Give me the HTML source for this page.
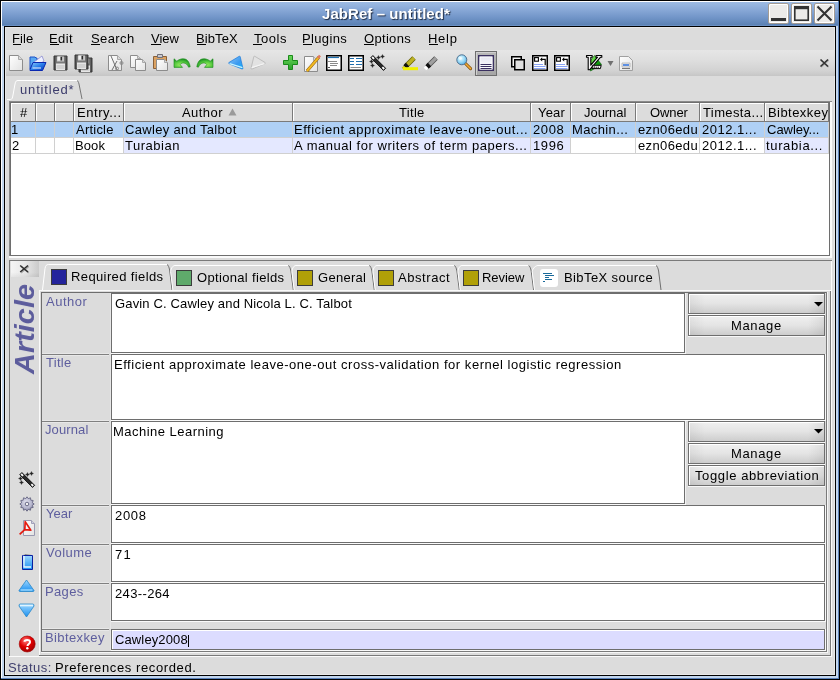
<!DOCTYPE html>
<html><head><meta charset="utf-8">
<style>
*{margin:0;padding:0;box-sizing:border-box}
html,body{width:840px;height:680px;overflow:hidden}
body{position:relative;background:#dcdcdc;font-family:"Liberation Sans",sans-serif;font-size:13px;color:#000}
.a{position:absolute}
.t{position:absolute;white-space:pre;line-height:1;will-change:transform}
svg{overflow:visible}
</style></head><body>
<div class="a" style="left:0px;top:0px;width:840px;height:680px;background:#c2d6ee"></div>
<div class="a" style="left:2px;top:2px;width:837px;height:24px;background:linear-gradient(#9dbbe3,#8aaad8 30%,#7195c8 65%,#5b81b3 96%,#6a90c4 96%)"></div>
<div class="a" style="left:838px;top:1px;width:1px;height:678px;background:#5a80b8"></div>
<div class="a" style="left:1px;top:678px;width:838px;height:1px;background:#5a80b8"></div>
<div class="a" style="left:0px;top:0px;width:840px;height:1px;background:#000"></div>
<div class="a" style="left:0px;top:0px;width:1px;height:680px;background:#000"></div>
<div class="a" style="left:839px;top:0px;width:1px;height:680px;background:#000"></div>
<div class="a" style="left:0px;top:679px;width:840px;height:1px;background:#000"></div>
<div class="a" style="left:1px;top:1px;width:837px;height:1px;background:#fff"></div>
<div class="a" style="left:1px;top:1px;width:1px;height:677px;background:#fff"></div>
<div class="a" style="left:4px;top:26px;width:832px;height:650px;background:#000"></div>
<div class="a" style="left:5px;top:27px;width:830px;height:648px;background:#e8e8e8"></div>
<div class="a" style="left:6px;top:28px;width:828px;height:646px;background:#dcdcdc"></div>
<div class="t" style="left:322.00px;top:6px;font:bold 15px 'Liberation Sans';line-height:1;color:#fff;letter-spacing:0.068px;text-shadow:1px 1px 1px rgba(20,30,50,.9)">JabRef – untitled*</div>
<div class="a" style="left:768px;top:3px;width:21px;height:21px;background:#ecebe9;border:1px solid #a49c94;border-radius:2px;box-shadow:inset 1px 1px 0 #fff,inset -1px -1px 0 #fff"></div>
<div class="a" style="left:791px;top:3px;width:21px;height:21px;background:#ecebe9;border:1px solid #a49c94;border-radius:2px;box-shadow:inset 1px 1px 0 #fff,inset -1px -1px 0 #fff"></div>
<div class="a" style="left:814px;top:3px;width:21px;height:21px;background:#ecebe9;border:1px solid #a49c94;border-radius:2px;box-shadow:inset 1px 1px 0 #fff,inset -1px -1px 0 #fff"></div>
<div class="a" style="left:771px;top:18px;width:15px;height:3px;background:#333"></div>
<svg class="a" style="left:793px;top:5px" width="17" height="17"><rect x="1.8" y="2.8" width="13.4" height="12.4" fill="none" stroke="#333" stroke-width="1.6"/><rect x="1" y="1" width="15" height="3.2" fill="#333"/></svg>
<svg class="a" style="left:814px;top:3px" width="21" height="21"><path d="M3.5 3.5L17.5 17.5M17.5 3.5L3.5 17.5" stroke="#333" stroke-width="2.1"/></svg>
<div class="t" style="left:12.00px;top:32px;font:normal 13px 'Liberation Sans';line-height:1;color:#000;letter-spacing:0.094px;">File</div>
<div class="t" style="left:49.00px;top:32px;font:normal 13px 'Liberation Sans';line-height:1;color:#000;letter-spacing:0.404px;">Edit</div>
<div class="t" style="left:91.00px;top:32px;font:normal 13px 'Liberation Sans';line-height:1;color:#000;letter-spacing:0.408px;">Search</div>
<div class="t" style="left:151.00px;top:32px;font:normal 13px 'Liberation Sans';line-height:1;color:#000;letter-spacing:-0.018px;">View</div>
<div class="t" style="left:196.00px;top:32px;font:normal 13px 'Liberation Sans';line-height:1;color:#000;letter-spacing:0.096px;">BibTeX</div>
<div class="t" style="left:253.60px;top:32px;font:normal 13px 'Liberation Sans';line-height:1;color:#000;letter-spacing:0.538px;">Tools</div>
<div class="t" style="left:302.00px;top:32px;font:normal 13px 'Liberation Sans';line-height:1;color:#000;letter-spacing:0.360px;">Plugins</div>
<div class="t" style="left:364.00px;top:32px;font:normal 13px 'Liberation Sans';line-height:1;color:#000;letter-spacing:0.316px;">Options</div>
<div class="t" style="left:427.70px;top:32px;font:normal 13px 'Liberation Sans';line-height:1;color:#000;letter-spacing:0.731px;">Help</div>
<div class="a" style="left:13px;top:44px;width:8px;height:1px;background:#000"></div>
<div class="a" style="left:50px;top:44px;width:9px;height:1px;background:#000"></div>
<div class="a" style="left:91px;top:44px;width:9px;height:1px;background:#000"></div>
<div class="a" style="left:151px;top:44px;width:10px;height:1px;background:#000"></div>
<div class="a" style="left:197px;top:44px;width:9px;height:1px;background:#000"></div>
<div class="a" style="left:253px;top:44px;width:9px;height:1px;background:#000"></div>
<div class="a" style="left:303px;top:44px;width:9px;height:1px;background:#000"></div>
<div class="a" style="left:364px;top:44px;width:10px;height:1px;background:#000"></div>
<div class="a" style="left:429px;top:44px;width:9px;height:1px;background:#000"></div>
<div class="a" style="left:6px;top:50px;width:829px;height:26px;background:linear-gradient(#e6e6e6,#dedede 40%,#d2d2d2 80%,#c6c6c6)"></div>
<svg class="a" style="left:6px;top:78px" width="90" height="24"><path d="M1 21.5H4.5C6 21.5 6.5 20 7 17L9 6C9.5 3 10.5 2.5 12 2.5H71" fill="none" stroke="#fff" stroke-width="1"/><path d="M71 2.5C72 3 72.5 4 73 6L76 21" fill="none" stroke="#777" stroke-width="1"/></svg>
<div class="t" style="left:19.60px;top:83px;font:normal 13px 'Liberation Sans';line-height:1;color:#3c3c6c;letter-spacing:0.835px;">untitled*</div>
<div class="a" style="left:9px;top:101px;width:823px;height:157px;background:#fff"></div>
<div class="a" style="left:9px;top:101px;width:823px;height:1px;background:#8a8a8a"></div>
<div class="a" style="left:9px;top:101px;width:1px;height:157px;background:#8a8a8a"></div>
<div class="a" style="left:830px;top:102px;width:2px;height:156px;background:#fafafa"></div>
<div class="a" style="left:9px;top:256px;width:823px;height:2px;background:#fafafa"></div>
<div class="a" style="left:10px;top:102px;width:820px;height:154px;border:1px solid #6e6e6e;background:#fff"></div>
<div class="a" style="left:11px;top:103px;width:25px;height:19px;background:#dcdcdc;border-right:1px solid #7a7a7a;border-bottom:1px solid #7a7a7a;box-shadow:inset 1px 1px 0 #fff"></div>
<div class="a" style="left:36px;top:103px;width:19px;height:19px;background:#dcdcdc;border-right:1px solid #7a7a7a;border-bottom:1px solid #7a7a7a;box-shadow:inset 1px 1px 0 #fff"></div>
<div class="a" style="left:55px;top:103px;width:19px;height:19px;background:#dcdcdc;border-right:1px solid #7a7a7a;border-bottom:1px solid #7a7a7a;box-shadow:inset 1px 1px 0 #fff"></div>
<div class="a" style="left:74px;top:103px;width:50px;height:19px;background:#dcdcdc;border-right:1px solid #7a7a7a;border-bottom:1px solid #7a7a7a;box-shadow:inset 1px 1px 0 #fff"></div>
<div class="a" style="left:124px;top:103px;width:169px;height:19px;background:#dcdcdc;border-right:1px solid #7a7a7a;border-bottom:1px solid #7a7a7a;box-shadow:inset 1px 1px 0 #fff"></div>
<div class="a" style="left:293px;top:103px;width:238px;height:19px;background:#dcdcdc;border-right:1px solid #7a7a7a;border-bottom:1px solid #7a7a7a;box-shadow:inset 1px 1px 0 #fff"></div>
<div class="a" style="left:531px;top:103px;width:40px;height:19px;background:#dcdcdc;border-right:1px solid #7a7a7a;border-bottom:1px solid #7a7a7a;box-shadow:inset 1px 1px 0 #fff"></div>
<div class="a" style="left:571px;top:103px;width:65px;height:19px;background:#dcdcdc;border-right:1px solid #7a7a7a;border-bottom:1px solid #7a7a7a;box-shadow:inset 1px 1px 0 #fff"></div>
<div class="a" style="left:636px;top:103px;width:64px;height:19px;background:#dcdcdc;border-right:1px solid #7a7a7a;border-bottom:1px solid #7a7a7a;box-shadow:inset 1px 1px 0 #fff"></div>
<div class="a" style="left:700px;top:103px;width:65px;height:19px;background:#dcdcdc;border-right:1px solid #7a7a7a;border-bottom:1px solid #7a7a7a;box-shadow:inset 1px 1px 0 #fff"></div>
<div class="a" style="left:765px;top:103px;width:64px;height:19px;background:#dcdcdc;border-right:1px solid #7a7a7a;border-bottom:1px solid #7a7a7a;box-shadow:inset 1px 1px 0 #fff"></div>
<div class="a" style="left:11px;top:122px;width:818px;height:15px;background:#afd0f5"></div>
<div class="a" style="left:11px;top:137px;width:818px;height:1px;background:#d0d0d0"></div>
<div class="a" style="left:11px;top:138px;width:818px;height:15px;background:#fff"></div>
<div class="a" style="left:124px;top:138px;width:169px;height:15px;background:#e4e8ff"></div>
<div class="a" style="left:293px;top:138px;width:238px;height:15px;background:#e4e8ff"></div>
<div class="a" style="left:531px;top:138px;width:40px;height:15px;background:#e4e8ff"></div>
<div class="a" style="left:765px;top:138px;width:64px;height:15px;background:#e4e8ff"></div>
<div class="a" style="left:11px;top:153px;width:818px;height:1px;background:#d0d0d0"></div>
<div class="a" style="left:35px;top:122px;width:1px;height:32px;background:#d0d0d0"></div>
<div class="a" style="left:54px;top:122px;width:1px;height:32px;background:#d0d0d0"></div>
<div class="a" style="left:73px;top:122px;width:1px;height:32px;background:#d0d0d0"></div>
<div class="a" style="left:123px;top:122px;width:1px;height:32px;background:#d0d0d0"></div>
<div class="a" style="left:292px;top:122px;width:1px;height:32px;background:#d0d0d0"></div>
<div class="a" style="left:530px;top:122px;width:1px;height:32px;background:#d0d0d0"></div>
<div class="a" style="left:570px;top:122px;width:1px;height:32px;background:#d0d0d0"></div>
<div class="a" style="left:635px;top:122px;width:1px;height:32px;background:#d0d0d0"></div>
<div class="a" style="left:699px;top:122px;width:1px;height:32px;background:#d0d0d0"></div>
<div class="a" style="left:764px;top:122px;width:1px;height:32px;background:#d0d0d0"></div>
<div class="a" style="left:828px;top:122px;width:1px;height:32px;background:#d0d0d0"></div>
<div class="t" style="left:20.10px;top:106px;font:normal 13px 'Liberation Sans';line-height:1;color:#000;letter-spacing:0.000px;">#</div>
<div class="t" style="left:77.00px;top:106px;font:normal 13px 'Liberation Sans';line-height:1;color:#000;letter-spacing:0.557px;">Entry...</div>
<div class="t" style="left:182.40px;top:106px;font:normal 13px 'Liberation Sans';line-height:1;color:#000;letter-spacing:0.445px;">Author</div>
<svg class="a" style="left:228px;top:108px" width="9" height="8"><path d="M4.5 0.5L8.5 7.5H0.5Z" fill="#9a9a9a"/></svg>
<div class="t" style="left:398.95px;top:106px;font:normal 13px 'Liberation Sans';line-height:1;color:#000;letter-spacing:0.313px;">Title</div>
<div class="t" style="left:538.30px;top:106px;font:normal 13px 'Liberation Sans';line-height:1;color:#000;letter-spacing:0.188px;">Year</div>
<div class="t" style="left:583.80px;top:106px;font:normal 13px 'Liberation Sans';line-height:1;color:#000;letter-spacing:-0.042px;">Journal</div>
<div class="t" style="left:650.10px;top:106px;font:normal 13px 'Liberation Sans';line-height:1;color:#000;letter-spacing:-0.115px;">Owner</div>
<div class="t" style="left:703.20px;top:106px;font:normal 13px 'Liberation Sans';line-height:1;color:#000;letter-spacing:0.392px;">Timesta...</div>
<div class="t" style="left:767.70px;top:106px;font:normal 13px 'Liberation Sans';line-height:1;color:#000;letter-spacing:0.442px;">Bibtexkey</div>
<div class="t" style="left:11.30px;top:123px;font:normal 13px 'Liberation Sans';line-height:1;color:#000;letter-spacing:0.000px;">1</div>
<div class="t" style="left:75.70px;top:123px;font:normal 13px 'Liberation Sans';line-height:1;color:#000;letter-spacing:0.219px;">Article</div>
<div class="t" style="left:125.20px;top:123px;font:normal 13px 'Liberation Sans';line-height:1;color:#000;letter-spacing:0.330px;">Cawley and Talbot</div>
<div class="t" style="left:293.50px;top:123px;font:normal 13px 'Liberation Sans';line-height:1;color:#000;letter-spacing:0.500px;">Efficient approximate leave-one-out...</div>
<div class="t" style="left:532.50px;top:123px;font:normal 13px 'Liberation Sans';line-height:1;color:#000;letter-spacing:0.603px;">2008</div>
<div class="t" style="left:572.30px;top:123px;font:normal 13px 'Liberation Sans';line-height:1;color:#000;letter-spacing:0.384px;">Machin...</div>
<div class="t" style="left:637.80px;top:123px;font:normal 13px 'Liberation Sans';line-height:1;color:#000;letter-spacing:0.360px;">ezn06edu</div>
<div class="t" style="left:701.70px;top:123px;font:normal 13px 'Liberation Sans';line-height:1;color:#000;letter-spacing:0.489px;">2012.1...</div>
<div class="t" style="left:766.60px;top:123px;font:normal 13px 'Liberation Sans';line-height:1;color:#000;letter-spacing:-0.010px;">Cawley...</div>
<div class="t" style="left:11.60px;top:139px;font:normal 13px 'Liberation Sans';line-height:1;color:#000;letter-spacing:0.000px;">2</div>
<div class="t" style="left:74.70px;top:139px;font:normal 13px 'Liberation Sans';line-height:1;color:#000;letter-spacing:0.090px;">Book</div>
<div class="t" style="left:125.20px;top:139px;font:normal 13px 'Liberation Sans';line-height:1;color:#000;letter-spacing:0.529px;">Turabian</div>
<div class="t" style="left:293.60px;top:139px;font:normal 13px 'Liberation Sans';line-height:1;color:#000;letter-spacing:0.534px;">A manual for writers of term papers...</div>
<div class="t" style="left:532.50px;top:139px;font:normal 13px 'Liberation Sans';line-height:1;color:#000;letter-spacing:0.603px;">1996</div>
<div class="t" style="left:637.80px;top:139px;font:normal 13px 'Liberation Sans';line-height:1;color:#000;letter-spacing:0.360px;">ezn06edu</div>
<div class="t" style="left:701.70px;top:139px;font:normal 13px 'Liberation Sans';line-height:1;color:#000;letter-spacing:0.489px;">2012.1...</div>
<div class="t" style="left:765.80px;top:139px;font:normal 13px 'Liberation Sans';line-height:1;color:#000;letter-spacing:0.647px;">turabia...</div>
<div class="a" style="left:9px;top:260px;width:823px;height:397px;background:#dcdcdc"></div>
<div class="a" style="left:9px;top:260px;width:823px;height:1px;background:#7a7a7a"></div>
<div class="a" style="left:9px;top:260px;width:1px;height:397px;background:#7a7a7a"></div>
<div class="a" style="left:9px;top:656px;width:823px;height:1px;background:#fafafa"></div>
<div class="a" style="left:831px;top:261px;width:1px;height:396px;background:#fafafa"></div>
<div class="a" style="left:10px;top:261px;width:30px;height:395px;background:#dcdcdc"></div>
<div class="a" style="left:11px;top:261px;width:28px;height:16px;background:linear-gradient(to bottom,rgba(255,255,255,0) 70%,rgba(0,0,0,.06)),linear-gradient(to right,#f4f4f4 0%,#e8e8e8 50%,#cacaca 100%)"></div>
<svg class="a" style="left:19px;top:264px" width="12" height="11"><path d="M1.2 1.5L9 8M9 1.5L1.2 8" stroke="#a8a8a8" stroke-width="1.5" transform="translate(0.8,0.8)"/><path d="M1.2 1.5L9 8M9 1.5L1.2 8" stroke="#2e2e2e" stroke-width="1.5"/></svg>
<div class="t" style="left:0;top:0;transform:translate(25.5px,329px) translate(-50%,-50%) rotate(-90deg) scaleX(1.07);font:italic bold 27px 'Liberation Sans';line-height:1;color:#5c5c9c">Article</div>
<div class="a" style="left:40px;top:290px;width:791px;height:1px;background:#fafafa"></div>
<div class="a" style="left:39px;top:290px;width:1px;height:365px;background:#fafafa"></div>
<div class="a" style="left:830px;top:291px;width:1px;height:365px;background:#7a7a7a"></div>
<div class="a" style="left:39px;top:655px;width:792px;height:1px;background:#7a7a7a"></div>
<div class="a" style="left:41px;top:292px;width:786px;height:360px;background:#dcdcdc"></div>
<div class="a" style="left:41px;top:292px;width:786px;height:1px;background:#6e6e6e"></div>
<div class="a" style="left:41px;top:292px;width:1px;height:360px;background:#6e6e6e"></div>
<div class="a" style="left:826px;top:292px;width:1px;height:360px;background:#7a7a7a"></div>
<div class="a" style="left:41px;top:651px;width:786px;height:1px;background:#7a7a7a"></div>
<div class="a" style="left:827px;top:292px;width:1px;height:361px;background:#f6f6f6"></div>
<div class="a" style="left:41px;top:652px;width:787px;height:1px;background:#f6f6f6"></div>
<div class="a" style="left:110px;top:293px;width:1px;height:358px;background:#e6e6e6"></div>
<div class="a" style="left:111px;top:353px;width:575px;height:1px;background:#fafafa"></div>
<div class="a" style="left:685px;top:293px;width:1px;height:61px;background:#fafafa"></div>
<div class="a" style="left:111px;top:293px;width:574px;height:60px;background:#fff;border:1px solid #6e6e6e"></div>
<div class="a" style="left:42px;top:354px;width:67px;height:1px;background:#808080"></div>
<div class="a" style="left:42px;top:353px;width:67px;height:1px;background:#e8e8e8"></div>
<div class="a" style="left:42px;top:355px;width:67px;height:1px;background:#e8e8e8"></div>
<div class="a" style="left:111px;top:420px;width:715px;height:1px;background:#fafafa"></div>
<div class="a" style="left:825px;top:354px;width:1px;height:67px;background:#fafafa"></div>
<div class="a" style="left:111px;top:354px;width:714px;height:66px;background:#fff;border:1px solid #6e6e6e"></div>
<div class="a" style="left:42px;top:421px;width:67px;height:1px;background:#808080"></div>
<div class="a" style="left:42px;top:420px;width:67px;height:1px;background:#e8e8e8"></div>
<div class="a" style="left:42px;top:422px;width:67px;height:1px;background:#e8e8e8"></div>
<div class="a" style="left:111px;top:504px;width:575px;height:1px;background:#fafafa"></div>
<div class="a" style="left:685px;top:421px;width:1px;height:84px;background:#fafafa"></div>
<div class="a" style="left:111px;top:421px;width:574px;height:83px;background:#fff;border:1px solid #6e6e6e"></div>
<div class="a" style="left:42px;top:505px;width:67px;height:1px;background:#808080"></div>
<div class="a" style="left:42px;top:504px;width:67px;height:1px;background:#e8e8e8"></div>
<div class="a" style="left:42px;top:506px;width:67px;height:1px;background:#e8e8e8"></div>
<div class="a" style="left:111px;top:543px;width:715px;height:1px;background:#fafafa"></div>
<div class="a" style="left:825px;top:505px;width:1px;height:39px;background:#fafafa"></div>
<div class="a" style="left:111px;top:505px;width:714px;height:38px;background:#fff;border:1px solid #6e6e6e"></div>
<div class="a" style="left:42px;top:544px;width:67px;height:1px;background:#808080"></div>
<div class="a" style="left:42px;top:543px;width:67px;height:1px;background:#e8e8e8"></div>
<div class="a" style="left:42px;top:545px;width:67px;height:1px;background:#e8e8e8"></div>
<div class="a" style="left:111px;top:582px;width:715px;height:1px;background:#fafafa"></div>
<div class="a" style="left:825px;top:544px;width:1px;height:39px;background:#fafafa"></div>
<div class="a" style="left:111px;top:544px;width:714px;height:38px;background:#fff;border:1px solid #6e6e6e"></div>
<div class="a" style="left:42px;top:583px;width:67px;height:1px;background:#808080"></div>
<div class="a" style="left:42px;top:582px;width:67px;height:1px;background:#e8e8e8"></div>
<div class="a" style="left:42px;top:584px;width:67px;height:1px;background:#e8e8e8"></div>
<div class="a" style="left:111px;top:621px;width:715px;height:1px;background:#fafafa"></div>
<div class="a" style="left:825px;top:583px;width:1px;height:39px;background:#fafafa"></div>
<div class="a" style="left:111px;top:583px;width:714px;height:38px;background:#fff;border:1px solid #6e6e6e"></div>
<div class="a" style="left:42px;top:629px;width:67px;height:1px;background:#808080"></div>
<div class="a" style="left:42px;top:628px;width:67px;height:1px;background:#e8e8e8"></div>
<div class="a" style="left:42px;top:630px;width:67px;height:1px;background:#e8e8e8"></div>
<div class="a" style="left:111px;top:650px;width:715px;height:1px;background:#fafafa"></div>
<div class="a" style="left:825px;top:629px;width:1px;height:22px;background:#fafafa"></div>
<div class="a" style="left:111px;top:629px;width:714px;height:21px;background:#dcdcff;border:1px solid #6e6e6e;box-shadow:inset 1px 1px 0 #fff"></div>
<div class="a" style="left:685px;top:293px;width:1px;height:60px;background:#f2f2f2"></div>
<div class="a" style="left:685px;top:421px;width:1px;height:83px;background:#f2f2f2"></div>
<div class="a" style="left:688px;top:293px;width:137px;height:21px;border:1px solid #6e6e6e;background:linear-gradient(to right,rgba(0,0,0,.05),rgba(255,255,255,0) 12%,rgba(255,255,255,0) 88%,rgba(0,0,0,.07)),linear-gradient(#f0f0f0,#e4e4e4 50%,#cdcdcd);box-shadow:inset 1px 1px 0 #fff"></div>
<div class="a" style="left:688px;top:314px;width:137px;height:1px;background:#f8f8f8"></div>
<div class="a" style="left:688px;top:315px;width:137px;height:21px;border:1px solid #6e6e6e;background:linear-gradient(to right,rgba(0,0,0,.05),rgba(255,255,255,0) 12%,rgba(255,255,255,0) 88%,rgba(0,0,0,.07)),linear-gradient(#f0f0f0,#e4e4e4 50%,#cdcdcd);box-shadow:inset 1px 1px 0 #fff"></div>
<div class="a" style="left:688px;top:336px;width:137px;height:1px;background:#f8f8f8"></div>
<div class="a" style="left:688px;top:421px;width:137px;height:21px;border:1px solid #6e6e6e;background:linear-gradient(to right,rgba(0,0,0,.05),rgba(255,255,255,0) 12%,rgba(255,255,255,0) 88%,rgba(0,0,0,.07)),linear-gradient(#f0f0f0,#e4e4e4 50%,#cdcdcd);box-shadow:inset 1px 1px 0 #fff"></div>
<div class="a" style="left:688px;top:442px;width:137px;height:1px;background:#f8f8f8"></div>
<div class="a" style="left:688px;top:443px;width:137px;height:21px;border:1px solid #6e6e6e;background:linear-gradient(to right,rgba(0,0,0,.05),rgba(255,255,255,0) 12%,rgba(255,255,255,0) 88%,rgba(0,0,0,.07)),linear-gradient(#f0f0f0,#e4e4e4 50%,#cdcdcd);box-shadow:inset 1px 1px 0 #fff"></div>
<div class="a" style="left:688px;top:464px;width:137px;height:1px;background:#f8f8f8"></div>
<div class="a" style="left:688px;top:465px;width:137px;height:21px;border:1px solid #6e6e6e;background:linear-gradient(to right,rgba(0,0,0,.05),rgba(255,255,255,0) 12%,rgba(255,255,255,0) 88%,rgba(0,0,0,.07)),linear-gradient(#f0f0f0,#e4e4e4 50%,#cdcdcd);box-shadow:inset 1px 1px 0 #fff"></div>
<div class="a" style="left:688px;top:486px;width:137px;height:1px;background:#f8f8f8"></div>
<svg class="a" style="left:814px;top:302px" width="9" height="5"><path d="M0 0H9L4.5 4.5Z" fill="#000"/></svg>
<svg class="a" style="left:814px;top:429px" width="9" height="5"><path d="M0 0H9L4.5 4.5Z" fill="#000"/></svg>
<div class="t" style="left:731.30px;top:319px;font:normal 13px 'Liberation Sans';line-height:1;color:#000;letter-spacing:0.650px;">Manage</div>
<div class="t" style="left:731.30px;top:447px;font:normal 13px 'Liberation Sans';line-height:1;color:#000;letter-spacing:0.650px;">Manage</div>
<div class="t" style="left:695.25px;top:469px;font:normal 13px 'Liberation Sans';line-height:1;color:#000;letter-spacing:0.610px;">Toggle abbreviation</div>
<div class="t" style="left:46.20px;top:295px;font:normal 13px 'Liberation Sans';line-height:1;color:#5e5e9e;letter-spacing:0.525px;">Author</div>
<div class="t" style="left:46.30px;top:356px;font:normal 13px 'Liberation Sans';line-height:1;color:#5e5e9e;letter-spacing:0.288px;">Title</div>
<div class="t" style="left:45.10px;top:423px;font:normal 13px 'Liberation Sans';line-height:1;color:#5e5e9e;letter-spacing:0.108px;">Journal</div>
<div class="t" style="left:46.40px;top:507px;font:normal 13px 'Liberation Sans';line-height:1;color:#5e5e9e;letter-spacing:0.054px;">Year</div>
<div class="t" style="left:45.80px;top:546px;font:normal 13px 'Liberation Sans';line-height:1;color:#5e5e9e;letter-spacing:0.494px;">Volume</div>
<div class="t" style="left:45.40px;top:585px;font:normal 13px 'Liberation Sans';line-height:1;color:#5e5e9e;letter-spacing:0.360px;">Pages</div>
<div class="t" style="left:45.40px;top:631px;font:normal 13px 'Liberation Sans';line-height:1;color:#5e5e9e;letter-spacing:0.380px;">Bibtexkey</div>
<div class="t" style="left:114.60px;top:297px;font:normal 13px 'Liberation Sans';line-height:1;color:#000;letter-spacing:0.153px;">Gavin C. Cawley and Nicola L. C. Talbot</div>
<div class="t" style="left:113.60px;top:358px;font:normal 13px 'Liberation Sans';line-height:1;color:#000;letter-spacing:0.531px;">Efficient approximate leave-one-out cross-validation for kernel logistic regression</div>
<div class="t" style="left:113.30px;top:425px;font:normal 13px 'Liberation Sans';line-height:1;color:#000;letter-spacing:0.472px;">Machine Learning</div>
<div class="t" style="left:114.60px;top:509px;font:normal 13px 'Liberation Sans';line-height:1;color:#000;letter-spacing:0.670px;">2008</div>
<div class="t" style="left:114.60px;top:548px;font:normal 13px 'Liberation Sans';line-height:1;color:#000;letter-spacing:1.270px;">71</div>
<div class="t" style="left:114.60px;top:587px;font:normal 13px 'Liberation Sans';line-height:1;color:#000;letter-spacing:0.356px;">243--264</div>
<div class="t" style="left:114.60px;top:633px;font:normal 13px 'Liberation Sans';line-height:1;color:#000;letter-spacing:0.121px;">Cawley2008</div>
<div class="a" style="left:188px;top:635px;width:1px;height:12px;background:#000"></div>
<svg class="a" style="left:0;top:0" width="840" height="300"><path d="M42.5 290L45 268.5C45.5 265.5 46.5 264.5 48.5 264.5H167" fill="none" stroke="#fff"/><path d="M167 264.5C168.2 265 169 267 169.6 270L172 290" fill="none" stroke="#6e6e6e" stroke-width="1"/><path d="M175 265.5C173 265.5 171 268 170.6 271.5L172.9 290" fill="none" stroke="#fff" stroke-width="1"/><path d="M174.5 265.5H288.3" stroke="#fff" stroke-width="1"/><path d="M288.3 265.5C289.5 266 290.3 268 290.90000000000003 271L293.3 290" fill="none" stroke="#6e6e6e" stroke-width="1"/><path d="M296 265.5C294 265.5 292.3 268 291.90000000000003 271.5L294.2 290" fill="none" stroke="#fff" stroke-width="1"/><path d="M295.5 265.5H369.3" stroke="#fff" stroke-width="1"/><path d="M369.3 265.5C370.5 266 371.3 268 371.90000000000003 271L374.3 290" fill="none" stroke="#6e6e6e" stroke-width="1"/><path d="M377 265.5C375 265.5 373.3 268 372.90000000000003 271.5L375.2 290" fill="none" stroke="#fff" stroke-width="1"/><path d="M376.5 265.5H454.3" stroke="#fff" stroke-width="1"/><path d="M454.3 265.5C455.5 266 456.3 268 456.90000000000003 271L459.3 290" fill="none" stroke="#6e6e6e" stroke-width="1"/><path d="M462 265.5C460 265.5 458.3 268 457.90000000000003 271.5L460.2 290" fill="none" stroke="#fff" stroke-width="1"/><path d="M461.5 265.5H528.6" stroke="#fff" stroke-width="1"/><path d="M528.6 265.5C529.8000000000001 266 530.6 268 531.2 271L533.6 290" fill="none" stroke="#6e6e6e" stroke-width="1"/><path d="M538 265.5C536 265.5 532.6 268 532.2 271.5L534.5 290" fill="none" stroke="#fff" stroke-width="1"/><path d="M537.5 265.5H656" fill="none" stroke="#fff"/><path d="M656 265.5C657.2 266 658 268 658.6 271L661 290" fill="none" stroke="#6e6e6e" stroke-width="1"/></svg>
<div class="a" style="left:51px;top:269px;width:16px;height:16px;background:#24249c;border:1px solid #3c3c3c"></div>
<div class="t" style="left:70.70px;top:270px;font:normal 13px 'Liberation Sans';line-height:1;color:#000;letter-spacing:0.385px;">Required fields</div>
<div class="a" style="left:176px;top:270px;width:16px;height:16px;background:#5faa6b;border:1px solid #3c3c3c"></div>
<div class="t" style="left:197.00px;top:271px;font:normal 13px 'Liberation Sans';line-height:1;color:#000;letter-spacing:0.330px;">Optional fields</div>
<div class="a" style="left:297px;top:270px;width:16px;height:16px;background:#b0a008;border:1px solid #3c3c3c"></div>
<div class="t" style="left:317.50px;top:271px;font:normal 13px 'Liberation Sans';line-height:1;color:#000;letter-spacing:0.273px;">General</div>
<div class="a" style="left:378px;top:270px;width:16px;height:16px;background:#b0a008;border:1px solid #3c3c3c"></div>
<div class="t" style="left:398.00px;top:271px;font:normal 13px 'Liberation Sans';line-height:1;color:#000;letter-spacing:0.561px;">Abstract</div>
<div class="a" style="left:463px;top:270px;width:16px;height:16px;background:#b0a008;border:1px solid #3c3c3c"></div>
<div class="t" style="left:482.00px;top:271px;font:normal 13px 'Liberation Sans';line-height:1;color:#000;letter-spacing:-0.047px;">Review</div>
<div class="a" style="left:540px;top:269px;width:18px;height:18px;background:#fff;border-radius:3px"></div>
<svg class="a" style="left:540px;top:269px" width="18" height="18"><path d="M3 4.5H12M5 6.5H14M5 8.5H9M5 10.5H12M3 12.5H5" stroke="#1a6a9a" stroke-width="1.1"/></svg>
<div class="t" style="left:564.00px;top:271px;font:normal 13px 'Liberation Sans';line-height:1;color:#000;letter-spacing:0.401px;">BibTeX source</div>
<div class="t" style="left:7.60px;top:661px;font:normal 13px 'Liberation Sans';line-height:1;color:#40406e;letter-spacing:0.491px;">Status:</div>
<div class="t" style="left:55.40px;top:661px;font:normal 13px 'Liberation Sans';line-height:1;color:#000;letter-spacing:0.614px;">Preferences recorded.</div>
<svg width="0" height="0" style="position:absolute"><defs>
<linearGradient id="gpage" x1="0" y1="0" x2="1" y2="1"><stop offset="0" stop-color="#ffffff"/><stop offset="1" stop-color="#e2e2e2"/></linearGradient>
<linearGradient id="gblue" x1="0" y1="0" x2="1" y2="1"><stop offset="0" stop-color="#8fd0ff"/><stop offset=".5" stop-color="#2a7de8"/><stop offset="1" stop-color="#0030c0"/></linearGradient>
<linearGradient id="ggreen" x1="0" y1="0" x2="0" y2="1"><stop offset="0" stop-color="#6ad85a"/><stop offset="1" stop-color="#2aa02a"/></linearGradient>
<linearGradient id="gtri" x1="0" y1="0" x2="1" y2="1"><stop offset="0" stop-color="#8ac4f8"/><stop offset=".6" stop-color="#3a9af0"/><stop offset="1" stop-color="#10b8ff"/></linearGradient>
<linearGradient id="gfloppy" x1="0" y1="0" x2="1" y2="0"><stop offset="0" stop-color="#404040"/><stop offset=".2" stop-color="#7a7a7a"/><stop offset=".8" stop-color="#7a7a7a"/><stop offset="1" stop-color="#404040"/></linearGradient>
<linearGradient id="gpress" x1="0" y1="0" x2="0" y2="1"><stop offset="0" stop-color="#b4b4b4"/><stop offset="1" stop-color="#a4a4a4"/></linearGradient>
<linearGradient id="gdoc2" x1="0" y1="0" x2="0" y2="1"><stop offset="0" stop-color="#e4e4f0"/><stop offset="1" stop-color="#ffffff"/></linearGradient>
<radialGradient id="glens" cx=".4" cy=".35" r=".7"><stop offset="0" stop-color="#e8fbff"/><stop offset=".5" stop-color="#9fdcf8"/><stop offset="1" stop-color="#4aa8e0"/></radialGradient>
<radialGradient id="gred" cx=".4" cy=".3" r=".75"><stop offset="0" stop-color="#ff7a7a"/><stop offset=".5" stop-color="#e00000"/><stop offset="1" stop-color="#9a0000"/></radialGradient>
<linearGradient id="gbtn" x1="0" y1="0" x2="0" y2="1"><stop offset="0" stop-color="#9ed8ff"/><stop offset="1" stop-color="#1a8ff0"/></linearGradient>
<radialGradient id="ggear" cx=".45" cy=".4" r=".65"><stop offset="0" stop-color="#e4e4f0"/><stop offset=".6" stop-color="#b4b4cc"/><stop offset="1" stop-color="#6c6c8a"/></radialGradient>
<radialGradient id="gundo" cx=".4" cy=".7" r=".7"><stop offset="0" stop-color="#9af060"/><stop offset=".6" stop-color="#4cc03a"/><stop offset="1" stop-color="#1a9020"/></radialGradient>
<linearGradient id="gvim" x1="0" y1="0" x2="1" y2="1"><stop offset="0" stop-color="#8af060"/><stop offset=".45" stop-color="#40c030"/><stop offset=".55" stop-color="#10a010"/><stop offset="1" stop-color="#087a08"/></linearGradient>
</defs></svg>
<svg class="a" style="left:6px;top:52px" width="20" height="22" viewBox="0 0 20 22"><path d="M3.5 3.5H12.5L16.5 7.5V18.5H3.5Z" fill="url(#gpage)" stroke="#8c8c8c"/><path d="M12.5 3.5V7.5H16.5" fill="#d8d8d8" stroke="#a8a8a8"/></svg>
<svg class="a" style="left:29px;top:55px" width="18" height="17" viewBox="0 0 18 17"><path d="M1 2H6L7 3H8V14H1Z" fill="#5aa8f0" stroke="#1a50c8"/><path d="M5 7L13 1L15 6L7 12Z" fill="#eef0ff" stroke="#8c8cd0" stroke-width=".8"/><path d="M1 14.5L4 7.5H17L13.5 15.5H1Z" fill="url(#gblue)" stroke="#0a28b0"/><path d="M3.5 13H12" stroke="#fff" stroke-width="1.2" opacity=".8"/></svg>
<svg class="a" style="left:53px;top:55px" width="16" height="17" viewBox="0 0 16 17"><g transform="translate(0.5,0.5)"><path d="M0.5 .5H13.5V14.5H0.5Z" fill="url(#gfloppy)" stroke="#3a3a3a"/><rect x="3.5" y="1" width="7" height="5" fill="#c8c8c8"/><rect x="4" y="1" width="3" height="4" fill="#f0f0f0"/><rect x="7" y="1.5" width="1.6" height="3.5" fill="#2a2a2a"/><rect x="2.5" y="8" width="9" height="6.5" fill="#e6e6e6"/><path d="M3 10.5H11M3 12.5H11" stroke="#bdbdbd"/></g></svg>
<svg class="a" style="left:74px;top:54px" width="21" height="20" viewBox="0 0 21 20"><g transform="translate(4.5,3.5)"><path d="M0.5 .5H13.5V14.5H0.5Z" fill="url(#gfloppy)" stroke="#3a3a3a"/><rect x="3.5" y="1" width="7" height="5" fill="#c8c8c8"/><rect x="4" y="1" width="3" height="4" fill="#f0f0f0"/><rect x="7" y="1.5" width="1.6" height="3.5" fill="#2a2a2a"/><rect x="2.5" y="8" width="9" height="6.5" fill="#e6e6e6"/><path d="M3 10.5H11M3 12.5H11" stroke="#bdbdbd"/></g><g transform="translate(0.5,0.5)"><path d="M0.5 .5H13.5V14.5H0.5Z" fill="url(#gfloppy)" stroke="#3a3a3a"/><rect x="3.5" y="1" width="7" height="5" fill="#c8c8c8"/><rect x="4" y="1" width="3" height="4" fill="#f0f0f0"/><rect x="7" y="1.5" width="1.6" height="3.5" fill="#2a2a2a"/><rect x="2.5" y="8" width="9" height="6.5" fill="#e6e6e6"/><path d="M3 10.5H11M3 12.5H11" stroke="#bdbdbd"/></g></svg>
<svg class="a" style="left:106px;top:53px" width="20" height="20" viewBox="0 0 20 20"><path d="M2.5 2.5H11.5L15.5 6.5V17.5H2.5Z" fill="url(#gpage)" stroke="#8c8c8c"/><path d="M11.5 2.5V6.5H15.5" fill="#d8d8d8" stroke="#a8a8a8"/><path d="M5 3L11 17M11 8L6 17" stroke="#707070" stroke-width="1" fill="none"/><circle cx="15.5" cy="10" r="1.5" fill="none" stroke="#888"/><circle cx="11" cy="15.5" r="1.5" fill="none" stroke="#888"/></svg>
<svg class="a" style="left:128px;top:53px" width="20" height="20" viewBox="0 0 20 20"><path d="M2.5 2.5H9.5L12.5 5.5V14.5H2.5Z" fill="url(#gpage)" stroke="#8c8c8c"/><path d="M9.5 2.5V5.5H12.5" fill="#d8d8d8" stroke="#a8a8a8"/><path d="M7.5 6.5H14.5L17.5 9.5V17.5H7.5Z" fill="url(#gpage)" stroke="#8c8c8c"/><path d="M14.5 6.5V9.5H17.5" fill="#d8d8d8" stroke="#a8a8a8"/></svg>
<svg class="a" style="left:151px;top:53px" width="18" height="19" viewBox="0 0 18 19"><path d="M2.5 3.5H15.5V15.5H2.5Z" fill="#dba262" stroke="#8a6038"/><path d="M6.5 1.5H11.5V4.5H6.5Z" fill="#c8c8d0" stroke="#707078"/><path d="M5.5 6.5H13.5L16.5 9.5V17.5H5.5Z" fill="url(#gpage)" stroke="#8c8c8c"/><path d="M13.5 6.5V9.5H16.5" fill="#d8d8d8" stroke="#a8a8a8"/></svg>
<svg class="a" style="left:173px;top:58px" width="18" height="11" viewBox="0 0 18 11"><path d="M1 .8L3.8 3.2C6 1.2 8.5 .8 10.5 .8C14 .8 16.5 4 17.2 8.8L15.6 9.2C14.5 6.5 12.5 5 10.5 5C9 5 8 5.5 7.2 6.6L9.5 9.4H1Z" fill="url(#gundo)" stroke="#1a8a1a" stroke-width=".6"/></svg>
<svg class="a" style="left:196px;top:58px" width="18" height="11" viewBox="0 0 18 11"><g transform="translate(18,0) scale(-1,1)"><path d="M1 .8L3.8 3.2C6 1.2 8.5 .8 10.5 .8C14 .8 16.5 4 17.2 8.8L15.6 9.2C14.5 6.5 12.5 5 10.5 5C9 5 8 5.5 7.2 6.6L9.5 9.4H1Z" fill="url(#gundo)" stroke="#1a8a1a" stroke-width=".6"/></g></svg>
<svg class="a" style="left:227px;top:55px" width="18" height="16" viewBox="0 0 18 16"><path d="M1.8 7.6L12.2 1.3Q13 .9 13.2 1.7L15.9 13.2Q16 14.3 15 14L2.2 8.8Q1.3 8.2 1.8 7.6Z" fill="url(#gtri)" stroke="#1a78d8" stroke-width=".7"/><path d="M2.6 8.6L15.4 12.6" stroke="#c8f4ff" stroke-width="1.2"/></svg>
<svg class="a" style="left:250px;top:55px" width="18" height="16" viewBox="0 0 18 16"><path d="M15.2 7.6L4.8 1.3Q4 .9 3.8 1.7L1.1 13.2Q1 14.3 2 14L14.8 8.8Q15.7 8.2 15.2 7.6Z" fill="#e2e2e2" stroke="#b4b4b4" stroke-width=".8"/><path d="M14.4 8.6L1.6 12.6" stroke="#f4f4f4" stroke-width="1.2"/></svg>
<svg class="a" style="left:283px;top:55px" width="16" height="16" viewBox="0 0 16 16"><path d="M5.5 .5H9.5V5.5H14.5V9.5H9.5V14.5H5.5V9.5H.5V5.5H5.5Z" fill="url(#ggreen)" stroke="#1a8a1a"/></svg>
<svg class="a" style="left:303px;top:54px" width="19" height="19" viewBox="0 0 19 19"><path d="M1.5 2.5H10.5L14.5 6.5V17.5H1.5Z" fill="url(#gpage)" stroke="#8c8c8c"/><path d="M10.5 2.5V6.5H14.5" fill="#d8d8d8" stroke="#a8a8a8"/><path d="M4 17L16 3" stroke="#8a5a10" stroke-width="3"/><path d="M4 17L16 3" stroke="#f0b820" stroke-width="2"/><path d="M15 4L17 1.5" stroke="#e07860" stroke-width="2.5"/></svg>
<svg class="a" style="left:325px;top:54px" width="18" height="18" viewBox="0 0 18 18"><rect x="1.75" y="1.75" width="14.5" height="14.5" fill="#fff" stroke="#000" stroke-width="1.5"/><path d="M3 3.5H14" stroke="#1f6fae" stroke-width="1.2"/><path d="M3 7.5H12M5 9.5H13M5 11.5H12" stroke="#8a8a8a"/><path d="M3 13.5H5" stroke="#555"/></svg>
<svg class="a" style="left:347px;top:54px" width="18" height="18" viewBox="0 0 18 18"><rect x="1.75" y="1.75" width="14.5" height="14.5" fill="#fff" stroke="#000" stroke-width="1.5"/><path d="M3 4.5H7M9 4.5H15M3 7.5H7M9 7.5H15M3 10.5H7M9 10.5H15" stroke="#1f6fae" stroke-width="1.2"/><path d="M3.5 13.5H14" stroke="#8c8c8c"/></svg>
<svg class="a" style="left:368px;top:53px" width="20" height="20" viewBox="0 0 20 20"><g transform="rotate(45 10.2 10)"><rect x="1.2" y="8.5" width="18" height="3" fill="#2a2a2a" stroke="#000" stroke-width=".8"/><rect x="1.7" y="9.1" width="2.6" height="1.8" fill="#fff"/><rect x="16.1" y="9.1" width="2.6" height="1.8" fill="#fff"/></g><path d="M8.7 4.5L10.1 4.1L10.5 2.7L10.9 4.1L12.3 4.5L10.9 4.9L10.5 6.3L10.1 4.9ZM12.7 3.5L14.1 3.1L14.5 1.7L14.9 3.1L16.3 3.5L14.9 3.9L14.5 5.3L14.1 3.9ZM1.7 8.5L3.1 8.1L3.5 6.7L3.9 8.1L5.3 8.5L3.9 8.9L3.5 10.3L3.1 8.9ZM2.7 12.5L4.1 12.1L4.5 10.7L4.9 12.1L6.3 12.5L4.9 12.9L4.5 14.3L4.1 12.9Z" fill="#222" stroke="#222" stroke-width=".7"/></svg>
<svg class="a" style="left:401px;top:55px" width="18" height="17" viewBox="0 0 18 17"><path d="M5 11L13 3" stroke="#6a6400" stroke-width="5"/><path d="M5 11L13 3" stroke="#bcb224" stroke-width="3.4"/><path d="M4 12L6.5 9.5" stroke="#111" stroke-width="4.6"/><path d="M2 14L4 12" stroke="#c8c020" stroke-width="3.6"/><rect x="2" y="12.2" width="15" height="3" fill="#f0f000"/></svg>
<svg class="a" style="left:423px;top:55px" width="18" height="17" viewBox="0 0 18 17"><path d="M5 11L13 3" stroke="#505050" stroke-width="5"/><path d="M5 11L13 3" stroke="#a0a0a0" stroke-width="3.4"/><path d="M4 12L6.5 9.5" stroke="#111" stroke-width="4.6"/><path d="M2 14L4 12" stroke="#fff" stroke-width="3.6"/></svg>
<svg class="a" style="left:455px;top:53px" width="18" height="18" viewBox="0 0 18 18"><path d="M10.2 10.2L15.6 15.6" stroke="#7a4a00" stroke-width="3" stroke-linecap="round"/><path d="M10.2 10.2L15.6 15.6" stroke="#f0a838" stroke-width="1.6" stroke-linecap="round"/><circle cx="6.8" cy="6.8" r="5" fill="url(#glens)" stroke="#50708e" stroke-width="1"/><circle cx="5.3" cy="5.3" r="1.6" fill="#fff" opacity=".6"/></svg>
<div class="a" style="left:475px;top:51px;width:22px;height:25px;background:linear-gradient(#b8b8b8,#a6a6a6);border:1px solid #6e6e6e;box-shadow:inset 1px 1px 0 #d0d0d0"></div>
<svg class="a" style="left:477px;top:54px" width="18" height="18" viewBox="0 0 18 18"><rect x="1.75" y="1.75" width="14.5" height="14.5" fill="url(#gdoc2)" stroke="#3a3060" stroke-width="1.5"/><rect x="3" y="3" width="12" height="12" fill="none" stroke="#fff" stroke-width=".8"/><path d="M3.5 10.5H14.5M3.5 12.5H14.5M3.5 14.5H14.5" stroke="#3a3060" stroke-width="1"/></svg>
<svg class="a" style="left:510px;top:55px" width="16" height="16" viewBox="0 0 16 16"><rect x="1.75" y="1.75" width="9.5" height="10" fill="#f4f4f4" stroke="#000" stroke-width="1.5"/><rect x="4.75" y="4.75" width="9.5" height="10" fill="#e0e0e0" stroke="#000" stroke-width="1.5"/></svg>
<svg class="a" style="left:531px;top:54px" width="18" height="18" viewBox="0 0 18 18"><rect x="1.75" y="1.75" width="14.5" height="14.5" fill="#fff" stroke="#000" stroke-width="1.5"/><rect x="3.6" y="3.6" width="3.8" height="3.6" fill="#fff" stroke="#000" stroke-width="1.1"/><path d="M10.2 5.4H14.2V11.2" fill="none" stroke="#000" stroke-width="1.2"/><path d="M9 5.4L11.2 3.3V7.5Z" fill="#000"/><path d="M3 10.5H12M3 12.5H14.5M3 14.5H14.5" stroke="#8aa4f4" stroke-width="1"/></svg>
<svg class="a" style="left:553px;top:54px" width="18" height="18" viewBox="0 0 18 18"><rect x="1.75" y="1.75" width="14.5" height="14.5" fill="#fff" stroke="#000" stroke-width="1.5"/><rect x="3.6" y="3.6" width="3.8" height="3.6" fill="#fff" stroke="#000" stroke-width="1.1"/><path d="M10.2 5.4H14.2V11.2" fill="none" stroke="#000" stroke-width="1.2"/><path d="M9 5.4L11.2 3.3V7.5Z" fill="#000"/><path d="M3 10.5H12M3 12.5H14.5M3 14.5H14.5" stroke="#8aa4f4" stroke-width="1"/></svg>
<svg class="a" style="left:584px;top:53px" width="20" height="20" viewBox="0 0 20 20"><path d="M10.5 2.5L17.5 11.5L6.5 18L6.5 7.5Z" fill="url(#gvim)" stroke="#0a5a0a" stroke-width=".6"/><path d="M2.5 2.5H8.2V4.2H6.8V12.2L13.6 4.2H12V2.5H17.8V4.2H16.6L5.6 16.8H4.2V4.2H2.5Z" fill="#f4f4f4" stroke="#000" stroke-width="1.1" stroke-linejoin="round"/><path d="M8.6 12.3H17.2L16.4 15.6H8Z" fill="#fafafa" stroke="#000" stroke-width="1"/><path d="M10.2 13.2V15M12.2 13.6V15M14.2 13.6V15" stroke="#000" stroke-width=".9"/></svg>
<svg class="a" style="left:607px;top:60px" width="7" height="7" viewBox="0 0 7 7"><path d="M.5 1H6.5L3.5 6Z" fill="#707070"/></svg>
<svg class="a" style="left:618px;top:55px" width="16" height="17" viewBox="0 0 16 17"><path d="M1.5 1.5H10.5L14.5 5.5V15.5H1.5Z" fill="url(#gpage)" stroke="#a0a0a0"/><path d="M4 8H12V12H4Z" fill="#e8e8e8" stroke="#b0b0b0" stroke-width=".8"/><path d="M5 10H11" stroke="#3a78e0" stroke-width="1.6"/><path d="M4 13.5H12" stroke="#777"/></svg>
<svg class="a" style="left:819px;top:58px" width="11" height="10" viewBox="0 0 11 10"><path d="M1.5 1.5L9 8.5M9 1.5L1.5 8.5" stroke="#b0b0b0" stroke-width="1.6" transform="translate(.6,.6)"/><path d="M1.5 1.5L9 8.5M9 1.5L1.5 8.5" stroke="#333" stroke-width="1.6"/></svg>
<svg class="a" style="left:17px;top:470px" width="20" height="20" viewBox="0 0 20 20"><g transform="rotate(45 10.2 10)"><rect x="1.2" y="8.5" width="18" height="3" fill="#2a2a2a" stroke="#000" stroke-width=".8"/><rect x="1.7" y="9.1" width="2.6" height="1.8" fill="#fff"/><rect x="16.1" y="9.1" width="2.6" height="1.8" fill="#fff"/></g><path d="M8.7 4.5L10.1 4.1L10.5 2.7L10.9 4.1L12.3 4.5L10.9 4.9L10.5 6.3L10.1 4.9ZM12.7 3.5L14.1 3.1L14.5 1.7L14.9 3.1L16.3 3.5L14.9 3.9L14.5 5.3L14.1 3.9ZM1.7 8.5L3.1 8.1L3.5 6.7L3.9 8.1L5.3 8.5L3.9 8.9L3.5 10.3L3.1 8.9ZM2.7 12.5L4.1 12.1L4.5 10.7L4.9 12.1L6.3 12.5L4.9 12.9L4.5 14.3L4.1 12.9Z" fill="#222" stroke="#222" stroke-width=".7"/></svg>
<svg class="a" style="left:19px;top:496px" width="16" height="16" viewBox="0 0 16 16"><path d="M8 .8L9.3 2.6L11.5 1.8L11.8 4.2L14.2 4.5L13.4 6.7L15.2 8L13.4 9.3L14.2 11.5L11.8 11.8L11.5 14.2L9.3 13.4L8 15.2L6.7 13.4L4.5 14.2L4.2 11.8L1.8 11.5L2.6 9.3L.8 8L2.6 6.7L1.8 4.5L4.2 4.2L4.5 1.8L6.7 2.6Z" fill="url(#ggear)" stroke="#5c5c7a" stroke-width=".8"/><circle cx="8" cy="8" r="1.8" fill="#f0f0f0" stroke="#6a6a88" stroke-width="1"/></svg>
<svg class="a" style="left:18px;top:519px" width="18" height="18" viewBox="0 0 18 18"><path d="M5.5 1.5H13.5L16.5 4.5V16.5H5.5Z" fill="url(#gpage)" stroke="#9a9ab0"/><path d="M13.5 1.5V4.5H16.5" fill="#d0d0e0" stroke="#a0a0b8"/><path d="M1.6 15.4L6.8 10.6L7.2 2.6L12.8 11.2L6.8 10.6" fill="none" stroke="#e41a10" stroke-width="1.7" stroke-linejoin="round"/></svg>
<svg class="a" style="left:21px;top:553px" width="14" height="18" viewBox="0 0 14 18"><path d="M1.5 2.5H11.5V16.5H1.5Z" fill="url(#gbtn)" stroke="#0a20a0"/><path d="M3 3V14H10" fill="none" stroke="#fff" stroke-width="1.3" opacity=".9"/><path d="M2 2L4 1H11" stroke="#ddd"/></svg>
<svg class="a" style="left:18px;top:579px" width="17" height="14" viewBox="0 0 17 14"><path d="M8.5 1L16 11.5Q16 12.5 15 12.5H2Q1 12.5 1 11.5Z" fill="url(#gbtn)" stroke="#2a88c8" stroke-width=".8"/><path d="M2.5 11H14.5" stroke="#b8e8ff" stroke-width="1.2"/></svg>
<svg class="a" style="left:18px;top:602px" width="17" height="16" viewBox="0 0 17 16"><path d="M8.5 15L16 4Q16 2 15 2H2Q1 2 1 4Z" fill="url(#gbtn)" stroke="#2a88c8" stroke-width=".8"/><path d="M2 3.5H15" stroke="#e0f4ff" stroke-width="1.6"/></svg>
<svg class="a" style="left:18px;top:635px" width="18" height="18" viewBox="0 0 18 18"><circle cx="9.2" cy="9" r="8" fill="url(#gred)" stroke="#a00000" stroke-width=".6"/><path d="M6.5 6.8C6.5 4.5 12 4.2 12 7C12 9 9.5 9 9.5 11" fill="none" stroke="#fff" stroke-width="2"/><circle cx="9.3" cy="13.3" r="1.2" fill="#fff"/></svg>
</body></html>
